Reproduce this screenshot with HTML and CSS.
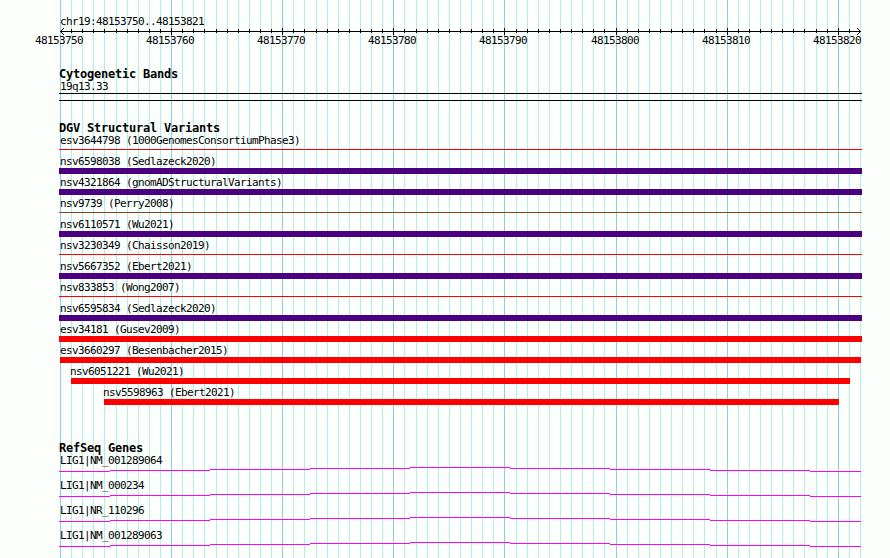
FILE: index.html
```
<!DOCTYPE html>
<html lang="en">
<head>
    <meta charset="UTF-8">
    <title>chr19:48153750..48153821</title>
    <link rel="stylesheet" href="styles.css">
</head>
<body>
    <div class="browser">
        <svg class="grid" width="890" height="558" shape-rendering="crispEdges">
            <defs>
                <pattern id="minor" x="60" y="0" width="100" height="558" patternUnits="userSpaceOnUse">
                    <path fill="#afeeee" d="M0 0h1v558h-1zM11 0h1v558h-1zM22 0h1v558h-1zM33 0h1v558h-1zM44 0h1v558h-1zM56 0h1v558h-1zM67 0h1v558h-1zM78 0h1v558h-1zM89 0h1v558h-1z"/>
                </pattern>
            </defs>
            <rect x="60" width="801" height="558" fill="url(#minor)"/>
            <path fill="#87ceeb" d="M60 0h1v558h-1zM171 0h1v558h-1zM282 0h1v558h-1zM393 0h1v558h-1zM504 0h1v558h-1zM616 0h1v558h-1zM727 0h1v558h-1zM838 0h1v558h-1z"/>
        </svg>

        <div class="region">chr19:48153750..48153821</div>
        <svg class="ruler" width="803" height="7" viewBox="59 28 803 7" shape-rendering="crispEdges">
            <defs>
                <pattern id="ticks" x="60" y="0" width="100" height="60" patternUnits="userSpaceOnUse">
                    <path d="M11 29h1v4h-1zM22 29h1v4h-1zM33 29h1v4h-1zM44 29h1v4h-1zM56 29h1v4h-1zM67 29h1v4h-1zM78 29h1v4h-1zM89 29h1v4h-1zM0 29h1v4h-1z"/>
                </pattern>
            </defs>
            <rect x="61" y="28" width="799" height="7" fill="url(#ticks)"/>
            <path d="M60 31h801v1h-801zM171 28h1v7h-1zM282 28h1v7h-1zM393 28h1v7h-1zM504 28h1v7h-1zM616 28h1v7h-1zM727 28h1v7h-1zM838 28h1v7h-1z"/>
            <path d="M61 30h1v1h-1zM62 29h1v1h-1zM63 28h1v1h-1zM61 32h1v1h-1zM62 33h1v1h-1zM63 34h1v1h-1z"/>
            <path d="M859 30h1v1h-1zM858 29h1v1h-1zM857 28h1v1h-1zM859 32h1v1h-1zM858 33h1v1h-1zM857 34h1v1h-1z"/>
        </svg>
        <div class="scale">
            <span>48153750</span><span>48153760</span><span>48153770</span><span>48153780</span>
            <span>48153790</span><span>48153800</span><span>48153810</span><span>48153820</span>
        </div>

        <div class="track cytobands">
            <h2>Cytogenetic Bands</h2>
            <div class="label">19q13.33</div>
            <div class="band"></div>
        </div>

        <div class="track variants">
            <h2>DGV Structural Variants</h2>
            <div class="row"><div class="label">esv3644798 (1000GenomesConsortiumPhase3)</div><div class="bar thin red"></div></div>
            <div class="row"><div class="label">nsv6598038 (Sedlazeck2020)</div><div class="bar purple"></div></div>
            <div class="row"><div class="label">nsv4321864 (gnomADStructuralVariants)</div><div class="bar purple"></div></div>
            <div class="row"><div class="label">nsv9739 (Perry2008)</div><div class="bar thin brown"></div></div>
            <div class="row"><div class="label">nsv6110571 (Wu2021)</div><div class="bar purple"></div></div>
            <div class="row"><div class="label">nsv3230349 (Chaisson2019)</div><div class="bar thin red"></div></div>
            <div class="row"><div class="label">nsv5667352 (Ebert2021)</div><div class="bar purple"></div></div>
            <div class="row"><div class="label">nsv833853 (Wong2007)</div><div class="bar thin red"></div></div>
            <div class="row"><div class="label">nsv6595834 (Sedlazeck2020)</div><div class="bar purple"></div></div>
            <div class="row"><div class="label">esv34181 (Gusev2009)</div><div class="bar red"></div></div>
            <div class="row besenbacher"><div class="label">esv3660297 (Besenbacher2015)</div><div class="bar red"></div></div>
            <div class="row wu"><div class="label">nsv6051221 (Wu2021)</div><div class="bar red"></div></div>
            <div class="row ebert"><div class="label">nsv5598963 (Ebert2021)</div><div class="bar red"></div></div>
        </div>

        <svg width="0" height="0" class="defs">
            <symbol id="intron" viewBox="0 0 802 5">
                <path fill="#ff00ff" d="M0 4h51v1h-51zM51 3h100v1h-100zM151 2h100v1h-100zM251 1h100v1h-100zM351 0h100v1h-100zM451 1h100v1h-100zM551 2h100v1h-100zM651 3h100v1h-100zM751 4h51v1h-51z"/>
            </symbol>
        </svg>
        <div class="track genes">
            <h2>RefSeq Genes</h2>
            <div class="gene"><div class="label">LIG1|NM_001289064</div><svg width="802" height="5" shape-rendering="crispEdges"><use href="#intron"/></svg></div>
            <div class="gene"><div class="label">LIG1|NM_000234</div><svg width="802" height="5" shape-rendering="crispEdges"><use href="#intron"/></svg></div>
            <div class="gene"><div class="label">LIG1|NR_110296</div><svg width="802" height="5" shape-rendering="crispEdges"><use href="#intron"/></svg></div>
            <div class="gene"><div class="label">LIG1|NM_001289063</div><svg width="802" height="5" shape-rendering="crispEdges"><use href="#intron"/></svg></div>
        </div>
    </div>
</body>
</html>
```
FILE: styles.css
```
* {
    box-sizing: border-box;
}
body {
    margin: 0;
    background-color: #fdfffc;
    color: #000;
    font-family: "DejaVu Sans Mono", monospace;
    font-size: 11px;
    line-height: 14px;
    letter-spacing: -0.622px;
    white-space: nowrap;
}
.browser {
    position: relative;
    width: 890px;
    height: 558px;
    padding: 14px 28px 0 59px;
    overflow: hidden;
}
/* vertical guide lines behind all tracks */
.grid {
    position: absolute;
    top: 0;
    left: 0;
    z-index: -1;
}
.region {
    height: 14px;
    padding-top: 1px;
    padding-left: 1px;
}
.ruler {
    display: block;
}
.scale {
    display: grid;
    grid-template-columns: repeat(4, 111px) 112px repeat(3, 111px);
    height: 13px;
    margin-left: -24px;
    margin-top: -1px;
}
h2 {
    margin: 0;
    height: 12px;
    padding-top: 1px;
    font-size: 12px;
    line-height: 12px;
    letter-spacing: -0.224px;
}
.label {
    height: 14px;
    padding-top: 1px;
    padding-left: 1px;
}
.cytobands {
    margin-top: 20px;
}
.band {
    width: 803px;
    height: 8px;
    border-top: 1px solid #000;
    border-bottom: 1px solid #000;
}
.variants {
    margin-top: 20px;
}
.row {
    width: 803px;
    height: 21px;
}
.bar {
    height: 6px;
}
.bar.thin {
    height: 1px;
    margin-top: 2px;
}
.red {
    background-color: #ff0000;
}
.purple {
    background-color: #4b0082;
}
.brown {
    background-color: #8b4513;
}
.besenbacher {
    width: 801px;
    margin-left: 1px;
}
.besenbacher .label {
    padding-left: 0;
}
.wu {
    width: 779px;
    margin-left: 12px;
}
.ebert {
    width: 735px;
    margin-left: 45px;
}
.wu .label, .ebert .label {
    padding-left: 0;
    margin-left: -1px;
}
.defs {
    display: block;
}
.genes {
    margin-top: 35px;
}
.gene {
    height: 25px;
}
.gene svg {
    display: block;
}
```
